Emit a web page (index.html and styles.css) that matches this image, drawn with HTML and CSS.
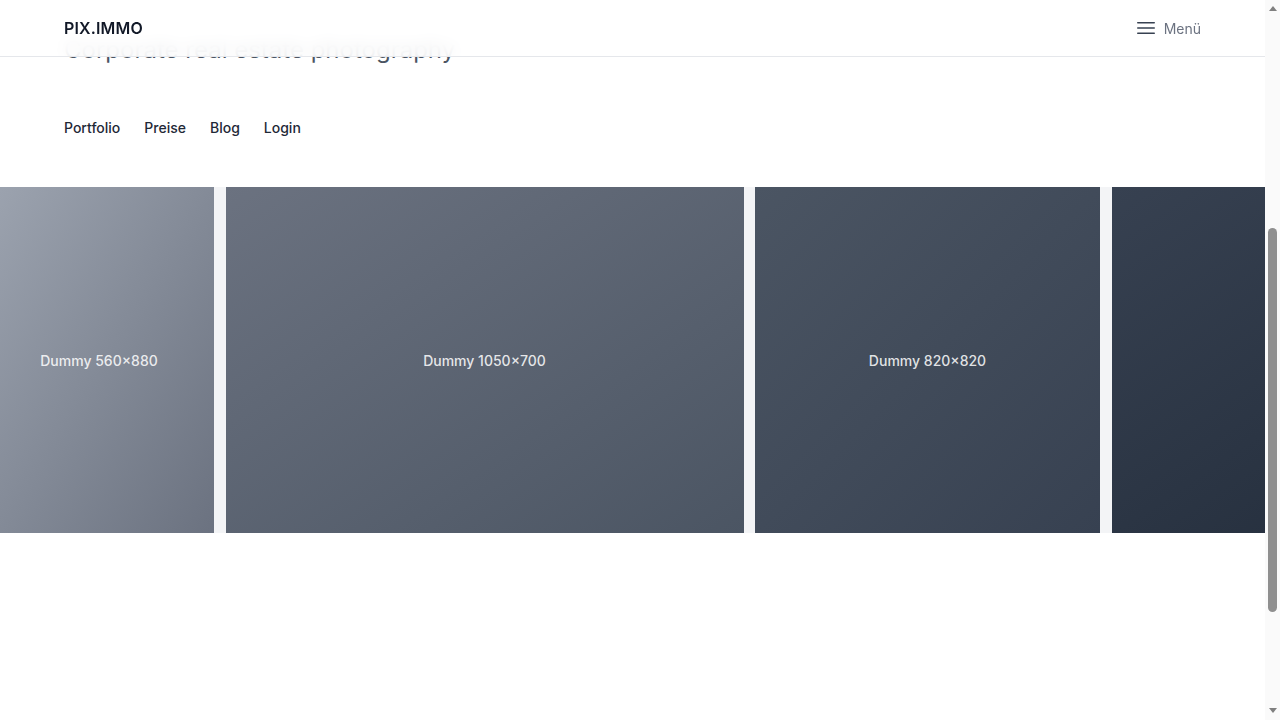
FILE: index.html
```html
<!DOCTYPE html>
<html lang="de">
<head>
<meta charset="utf-8">
<title>PIX.IMMO – Corporate real estate photography</title>
<link rel="stylesheet" href="styles.css">
</head>
<body>
<header class="site-header">
  <div class="header-inner">
    <a class="logo" href="#">PIX.IMMO</a>
    <button class="menu-btn" type="button">
      <svg class="menu-icon" viewBox="0 0 24 24" width="24" height="24" fill="none" stroke="currentColor" stroke-width="1.5" stroke-linecap="round" stroke-linejoin="round"><path d="M3.75 6.75h16.5M3.75 12h16.5M3.75 17.25h16.5"/></svg>
      <span>Menü</span>
    </button>
  </div>
</header>
<main class="page">
  <section class="hero">
    <p class="hero-sub">Corporate real estate photography</p>
    <nav class="hero-nav">
      <a href="#">Portfolio</a>
      <a href="#">Preise</a>
      <a href="#">Blog</a>
      <a href="#">Login</a>
    </nav>
  </section>
  <section class="gallery">
    <div class="gallery-track">
      <div class="shot shot-1" style="width:220px"><span class="shot-label shot-label-offset">Dummy 560×880</span></div>
      <div class="shot shot-2" style="width:518px"><span class="shot-label">Dummy 1050×700</span></div>
      <div class="shot shot-3" style="width:345px"><span class="shot-label">Dummy 820×820</span></div>
      <div class="shot shot-4" style="width:519px"></div>
    </div>
  </section>
</main>
<div class="scrollbar" aria-hidden="true">
  <div class="sb-btn sb-btn-up"><span class="sb-arrow-up"></span></div>
  <div class="sb-track"><div class="sb-thumb"></div></div>
  <div class="sb-btn sb-btn-down"><span class="sb-arrow-down"></span></div>
</div>
</body>
</html>
```
FILE: styles.css
```css
* { box-sizing: border-box; }
html, body { height: 100%; overflow: hidden; }
body {
  margin: 0 15px 0 0;
  font-family: Inter, "Noto Sans", "Liberation Sans", sans-serif;
  color: #1f2937;
  background: #ffffff;
}
a { color: inherit; text-decoration: none; }

/* header */
.site-header {
  position: fixed;
  top: 0;
  left: 0;
  right: 15px;
  z-index: 10;
  height: 57px;
  background: rgba(255, 255, 255, 0.88);
  backdrop-filter: blur(8px);
  border-bottom: 1px solid #e5e7eb;
}
.header-inner {
  height: 56px;
  padding: 0 64px;
  display: flex;
  align-items: center;
  justify-content: space-between;
}
.logo {
  font-size: 16px;
  font-weight: 600;
  color: #111827;
  letter-spacing: 0.01em;
}
.menu-btn {
  display: flex;
  align-items: center;
  gap: 6px;
  padding: 0;
  border: 0;
  background: none;
  font-family: inherit;
  font-size: 14px;
  color: #6b7280;
  cursor: pointer;
}
.menu-icon { color: #374151; display: block; }

/* hero */
.hero {
  padding: 34px 64px 0;
}
.hero-sub {
  margin: 0;
  font-size: 24px;
  line-height: 32px;
  color: #4b5563;
}
.hero-nav {
  margin-top: 50px;
  display: flex;
  gap: 24px;
  font-size: 14px;
  line-height: 24px;
  font-weight: 500;
  color: #1f2937;
}

/* gallery */
.gallery {
  margin-top: 47px;
  height: 346px;
  overflow: hidden;
  background: #f3f4f6;
}
.gallery-track {
  display: flex;
  gap: 11.5px;
  height: 100%;
  margin-left: -6px;
}
.shot {
  flex: none;
  height: 100%;
  display: flex;
  align-items: center;
  justify-content: center;
}
.shot-1 { background: linear-gradient(to bottom right, #9ca3af, #6b7280); }
.shot-2 { background: linear-gradient(to bottom right, #6b7280, #4b5563); }
.shot-3 { background: linear-gradient(to bottom right, #4b5563, #374151); }
.shot-4 { background: linear-gradient(to bottom right, #374151, #1f2937); }
.shot-label {
  font-size: 14px;
  font-weight: 500;
  color: rgba(255, 255, 255, 0.85);
}
.shot-label-offset { margin-right: 10px; }

/* browser scrollbar chrome */
.scrollbar {
  position: fixed;
  top: 0;
  right: 0;
  width: 15px;
  height: 100vh;
  background: #fafafa;
  display: flex;
  flex-direction: column;
  z-index: 20;
}
.sb-btn {
  flex: none;
  height: 15px;
  display: flex;
  justify-content: center;
}
.sb-btn-up { align-items: flex-start; padding-top: 6px; }
.sb-btn-down { align-items: flex-start; padding-top: 3px; }
.sb-arrow-up {
  width: 0;
  height: 0;
  border-left: 4.5px solid transparent;
  border-right: 4.5px solid transparent;
  border-bottom: 5px solid #7f7f7f;
}
.sb-arrow-down {
  width: 0;
  height: 0;
  border-left: 4.5px solid transparent;
  border-right: 4.5px solid transparent;
  border-top: 5px solid #7f7f7f;
}
.sb-track {
  flex: 1;
  padding: 213px 3px 0;
}
.sb-thumb {
  height: 384px;
  border-radius: 4.5px;
  background: #8f8f8f;
}
```
